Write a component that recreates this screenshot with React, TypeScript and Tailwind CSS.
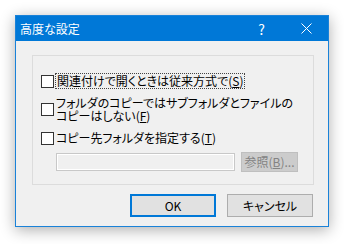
import React from "react";

const font = { fontFamily: '"Noto Sans CJK JP", "Noto Sans", sans-serif' };

function Box() {
  return <span className="box-border block w-[13px] h-[13px] shrink-0 border border-[#333333] bg-white" />;
}

export default function App() {
  return (
    <div className="w-[344px] h-[244px] bg-white pl-[15px] pt-[15px]" style={font}>
      <div className="box-border w-[314px] h-[212px] border border-[#1a82d8] bg-[#f0f0f0] shadow-[0_3px_14px_rgba(0,0,0,0.32)] flex flex-col">
        <div className="h-[25px] bg-[#0078d7] flex items-center text-white">
          <span className="pl-[4px] text-[12px] leading-none [font-feature-settings:'palt']">高度な設定</span>
          <span className="ml-auto mr-[36px] text-[14px] leading-none">?</span>
          <svg width="11" height="11" viewBox="0 0 11 11" className="mr-[16px]">
            <path d="M0.5 0.5L10.5 10.5M10.5 0.5L0.5 10.5" stroke="white" strokeWidth="1" />
          </svg>
        </div>
        <div className="flex-1 flex flex-col">
          <div className="box-border mt-[14px] ml-[16px] w-[282px] h-[130px] border border-[#dcdcdc] flex flex-col pl-[8px] pt-[16px] text-[12px] text-black [font-feature-settings:'palt']">
            <div className="h-[18px] flex items-center gap-[1px]">
              <Box />
              <span className="border border-dotted border-[#444] leading-[14px] px-[1px]">
                関連付けで開くときは従来方式で(<span className="underline">S</span>)
              </span>
            </div>
            <div className="mt-[6px] h-[26px] flex items-center gap-[2px]">
              <Box />
              <span className="leading-[13px]">
                フォルダのコピーではサブフォルダとファイルの
                <br />
                コピーはしない(<span className="underline">F</span>)
              </span>
            </div>
            <div className="mt-[7px] h-[18px] flex items-center gap-[2px]">
              <Box />
              <span className="leading-[14px]">
                コピー先フォルダを指定する(<span className="underline">T</span>)
              </span>
            </div>
            <div className="mt-[5px] h-[20px] flex items-center ml-[15px]">
              <div className="box-border w-[179px] h-[18px] border border-[#c8c8c8] bg-[#f0f0f0] shadow-[inset_0_0_0_1px_#ffffff]" />
              <div className="box-border ml-[6px] w-[57px] h-[20px] border border-[#bfbfbf] bg-[#cccccc] flex items-center justify-center text-[#838383] text-[12px] leading-none">
                参照(<span className="underline">B</span>)...
              </div>
            </div>
          </div>
          <div className="mt-[9px] flex justify-end pr-[15px] gap-[11px] text-[12px] text-black">
            <div className="box-border w-[86px] h-[23px] border-2 border-[#0078d7] bg-[#e1e1e1] flex items-center justify-center leading-none">
              OK
            </div>
            <div className="box-border w-[86px] h-[23px] border border-[#adadad] bg-[#e1e1e1] flex items-center justify-center leading-none [font-feature-settings:'palt']">
              キャンセル
            </div>
          </div>
        </div>
      </div>
    </div>
  );
}
